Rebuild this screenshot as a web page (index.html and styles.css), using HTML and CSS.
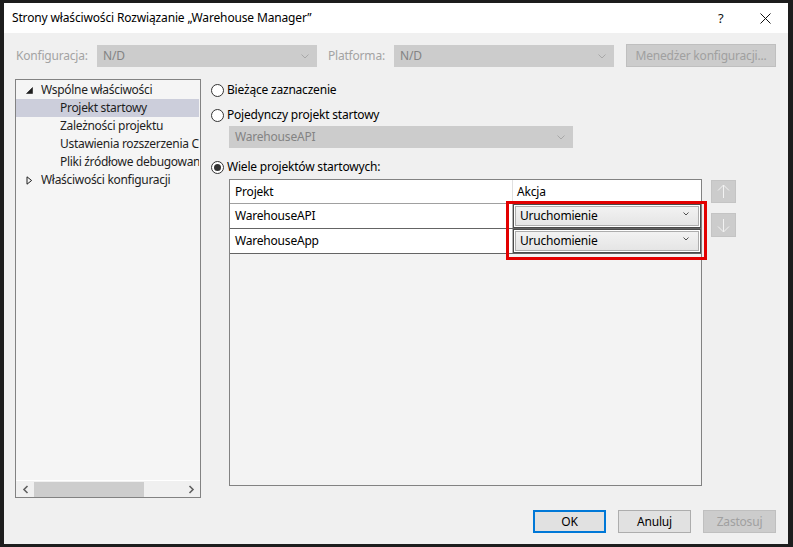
FILE: index.html
```html
<!DOCTYPE html>
<html lang="pl">
<head>
<meta charset="utf-8">
<title>Strony właściwości</title>
<link rel="stylesheet" href="styles.css">
</head>
<body>
<div class="screen">
  <div class="dialog">
    <div class="titlebar">
      <span class="title">Strony właściwości Rozwiązanie „Warehouse Manager”</span>
      <span class="help">?</span>
      <span class="close"><svg width="11" height="11" viewBox="0 0 11 11"><path d="M0.5 0.5 L10.5 10.5 M10.5 0.5 L0.5 10.5" stroke="#111" stroke-width="1" fill="none"/></svg></span>
    </div>
    <div class="body">
      <div class="config-row">
        <span class="lbl lbl-konf">Konfiguracja:</span>
        <div class="combo combo-dis combo-cfg"><span>N/D</span><svg class="chev" width="8" height="5" viewBox="0 0 8 5"><path d="M0.5 0.5 L4 4 L7.5 0.5" stroke="#a8a8a8" fill="none"/></svg></div>
        <span class="lbl lbl-plat">Platforma:</span>
        <div class="combo combo-dis combo-cfg"><span>N/D</span><svg class="chev" width="8" height="5" viewBox="0 0 8 5"><path d="M0.5 0.5 L4 4 L7.5 0.5" stroke="#a8a8a8" fill="none"/></svg></div>
        <div class="btn btn-dis btn-mgr">Menedżer konfiguracji...</div>
      </div>
      <div class="main">
        <div class="tree">
          <div class="tree-list">
            <div class="node top"><svg class="tri" width="7" height="7" viewBox="0 0 7 7"><path d="M6.5 0.5 L6.5 6.5 L0.5 6.5 Z" fill="#1e1e1e" stroke="#1e1e1e" stroke-width="0.6"/></svg><span class="ntext">Wspólne właściwości</span></div>
            <div class="node child selected"><span class="ntext">Projekt startowy</span></div>
            <div class="node child"><span class="ntext">Zależności projektu</span></div>
            <div class="node child"><span class="ntext">Ustawienia rozszerzenia Code Analysis</span></div>
            <div class="node child"><span class="ntext">Pliki źródłowe debugowania</span></div>
            <div class="node top"><svg class="tri" width="7" height="9" viewBox="0 0 7 9"><path d="M1 0.8 L5.6 4.5 L1 8.2 Z" fill="none" stroke="#1e1e1e" stroke-width="1"/></svg><span class="ntext">Właściwości konfiguracji</span></div>
          </div>
          <div class="hscroll">
            <svg class="sarrow" width="7" height="9" viewBox="0 0 7 9"><path d="M5.5 1 L2 4.5 L5.5 8" stroke="#606060" stroke-width="1.6" fill="none"/></svg>
            <div class="thumb-track"><div class="thumb"></div></div>
            <svg class="sarrow" width="7" height="9" viewBox="0 0 7 9"><path d="M1.5 1 L5 4.5 L1.5 8" stroke="#606060" stroke-width="1.6" fill="none"/></svg>
          </div>
        </div>
        <div class="pane">
          <label class="radio r1"><span class="dot"></span><span>Bieżące zaznaczenie</span></label>
          <label class="radio r2"><span class="dot"></span><span>Pojedynczy projekt startowy</span></label>
          <div class="combo combo-dis combo-single"><span>WarehouseAPI</span><svg class="chev" width="8" height="5" viewBox="0 0 8 5"><path d="M0.5 0.5 L4 4 L7.5 0.5" stroke="#a8a8a8" fill="none"/></svg></div>
          <label class="radio r3"><span class="dot checked"></span><span>Wiele projektów startowych:</span></label>
          <div class="grid-area">
            <div class="grid">
              <div class="grow ghead">
                <div class="cell c-proj">Projekt</div>
                <div class="cell c-act">Akcja</div>
              </div>
              <div class="grow gdata">
                <div class="cell c-proj">WarehouseAPI</div>
                <div class="cell c-act"><div class="cellcombo"><div class="cc-inner"><span>Uruchomienie</span><svg class="cchev" width="6" height="4" viewBox="0 0 6 4"><path d="M0.5 0.5 L3 3 L5.5 0.5" stroke="#505050" fill="none"/></svg></div></div></div>
              </div>
              <div class="grow gdata">
                <div class="cell c-proj">WarehouseApp</div>
                <div class="cell c-act"><div class="cellcombo"><div class="cc-inner"><span>Uruchomienie</span><svg class="cchev" width="6" height="4" viewBox="0 0 6 4"><path d="M0.5 0.5 L3 3 L5.5 0.5" stroke="#505050" fill="none"/></svg></div></div></div>
              </div>
              <div class="highlight"></div>
            </div>
            <div class="movers">
              <div class="mover up"><svg width="13" height="15" viewBox="0 0 13 15"><path d="M6.5 1 L6.5 14 M1 6.5 L6.5 1 L12 6.5" stroke="#f2f2f2" stroke-width="1" fill="none"/></svg></div>
              <div class="mover down"><svg width="13" height="15" viewBox="0 0 13 15"><path d="M6.5 1 L6.5 14 M1 8.5 L6.5 14 L12 8.5" stroke="#f2f2f2" stroke-width="1" fill="none"/></svg></div>
            </div>
          </div>
        </div>
      </div>
      <div class="buttons">
        <div class="btn btn-ok">OK</div>
        <div class="btn">Anuluj</div>
        <div class="btn btn-dis">Zastosuj</div>
      </div>
    </div>
  </div>
</div>
</body>
</html>
```

FILE: styles.css
```css
* { box-sizing: border-box; }
html, body { margin: 0; padding: 0; }
body {
  background: #1d1d1d;
  width: 793px;
  height: 547px;
  overflow: hidden;
  font-family: "Segoe UI", "Noto Sans", "Open Sans", sans-serif;
  font-size: 12px;
  line-height: 16px;
  letter-spacing: -0.2px;
  color: #000;
}
.screen { padding: 3px 5px 3px 4px; }
.dialog {
  width: 784px;
  height: 541px;
  background: #f0f0f0;
  display: flex;
  flex-direction: column;
}
.titlebar {
  height: 30px;
  background: #fff;
  display: flex;
  align-items: center;
  padding-left: 8px;
  flex: none;
}
.title { flex: 1; color: #000; letter-spacing: -0.15px; }
.help { width: 12px; margin-right: 30px; font-size: 13px; color: #111; }
.close { width: 11px; height: 11px; margin-right: 17px; display: flex; }

.body {
  flex: 1;
  padding: 11px 12px 11px 11px;
  display: flex;
  flex-direction: column;
}
.config-row { display: flex; align-items: flex-start; height: 23px; flex: none; }
.lbl { color: #a3a3a3; line-height: 24px; white-space: nowrap; flex: none; }
.lbl-konf { width: 82px; padding-left: 1px; }
.lbl-plat { width: 77px; padding-left: 11px; }

.combo {
  display: flex;
  align-items: center;
  justify-content: space-between;
  height: 22px;
  padding: 0 7px 0 5px;
  border: 1px solid #cccccc;
  background: #cccccc;
  color: #838383;
  flex: none;
}
.combo-cfg { width: 220px; margin-top: 1px; }

.btn {
  height: 23px;
  width: 73px;
  display: flex;
  align-items: center;
  justify-content: center;
  background: #e1e1e1;
  border: 1px solid #adadad;
  color: #000;
  white-space: nowrap;
  flex: none;
}
.btn-dis { background: #cccccc; border-color: #bfbfbf; color: #a0a0a0; }
.btn-ok { border: 2px solid #0078d7; }
.btn.btn-mgr { width: 150px; margin-left: 12px; }

.main { display: flex; height: 419px; margin-top: 12px; flex: none; }

.tree {
  width: 186px;
  flex: none;
  border: 1px solid #828282;
  background: #f5f5f5;
  display: flex;
  flex-direction: column;
  overflow: hidden;
}
.tree-list { flex: 1; padding-top: 1px; }
.node {
  height: 18px;
  display: flex;
  align-items: center;
  white-space: nowrap;
  overflow: hidden;
  color: #1e1e1e;
  margin-right: 1px;
}
.ntext { flex: 1; min-width: 0; overflow: hidden; text-overflow: clip; letter-spacing: -0.3px; }
.node.top { padding-left: 10px; }
.node.top .tri { width: 7px; margin-right: 8px; flex: none; }
.node.child { padding-left: 44px; }
.node.selected { background: #cccedb; }

.hscroll {
  height: 17px;
  border-top: 1px solid #ffffff;
  background: #f0f0f0;
  display: flex;
  align-items: center;
  padding: 0 5px 0 6px;
}
.sarrow { flex: none; }
.thumb-track { flex: 1; height: 15px; padding: 0 0 0 5px; }
.thumb { width: 110px; height: 15px; background: #cdcdcd; }

.pane { flex: 1; margin-left: 10px; display: flex; flex-direction: column; }
.radio { display: flex; align-items: center; height: 20px; color: #000; flex: none; }
.r1 { margin-top: 1px; }
.r2 { margin-top: 5px; }
.r3 { margin-top: 9px; }
.dot {
  width: 13px;
  height: 13px;
  border: 1px solid #333;
  border-radius: 50%;
  background: #fff;
  margin-right: 3px;
  flex: none;
  display: flex;
  align-items: center;
  justify-content: center;
}
.dot.checked::after {
  content: "";
  width: 7px;
  height: 7px;
  border-radius: 50%;
  background: #333;
}
.combo-single { width: 344px; margin-left: 18px; margin-top: 1px; }

.grid-area { display: flex; margin-top: 2px; margin-left: 18px; }
.grid {
  position: relative;
  flex: none;
  width: 473px;
  height: 307px;
  border: 1px solid #828282;
  background: #f3f3f3;
}
.grow { display: flex; background: #fff; }
.ghead { height: 24px; border-bottom: 1px solid #a0a0a0; }
.gdata { height: 25px; border-bottom: 1px solid #646464; }
.cell { display: flex; align-items: center; white-space: nowrap; }
.c-proj { width: 283px; padding-left: 5px; flex: none; }
.ghead .c-proj { border-right: 1px solid #e0e0e0; }
.gdata .c-proj { border-right: 1px solid #b5b5b5; }
.c-act { flex: 1; }
.ghead .c-act { padding-left: 4px; }
.gdata .c-act { align-items: stretch; }
.cellcombo {
  flex: 1;
  border: 1px solid #4a4a4a;
  padding: 1px;
  background: #fff;
}
.cc-inner {
  height: 100%;
  border: 1px solid #adadad;
  background: linear-gradient(#f2f2f2, #e5e5e5);
  display: flex;
  align-items: center;
  justify-content: space-between;
  padding: 0 9px 1px 4px;
}
.cchev { margin-top: -4px; }

.highlight {
  position: absolute;
  left: 276px;
  top: 21px;
  width: 201px;
  height: 59px;
  border: 3px solid #e20000;
}

.movers { display: flex; flex-direction: column; margin-left: 9px; }
.mover {
  width: 25px;
  background: #cccccc;
  border: 1px solid #c4c4c4;
  display: flex;
  align-items: center;
  justify-content: center;
}
.mover.up { height: 23px; margin-top: 1px; }
.mover.down { height: 24px; margin-top: 10px; }

.buttons {
  display: flex;
  justify-content: flex-end;
  gap: 12px;
  margin-top: 12px;
}
```
